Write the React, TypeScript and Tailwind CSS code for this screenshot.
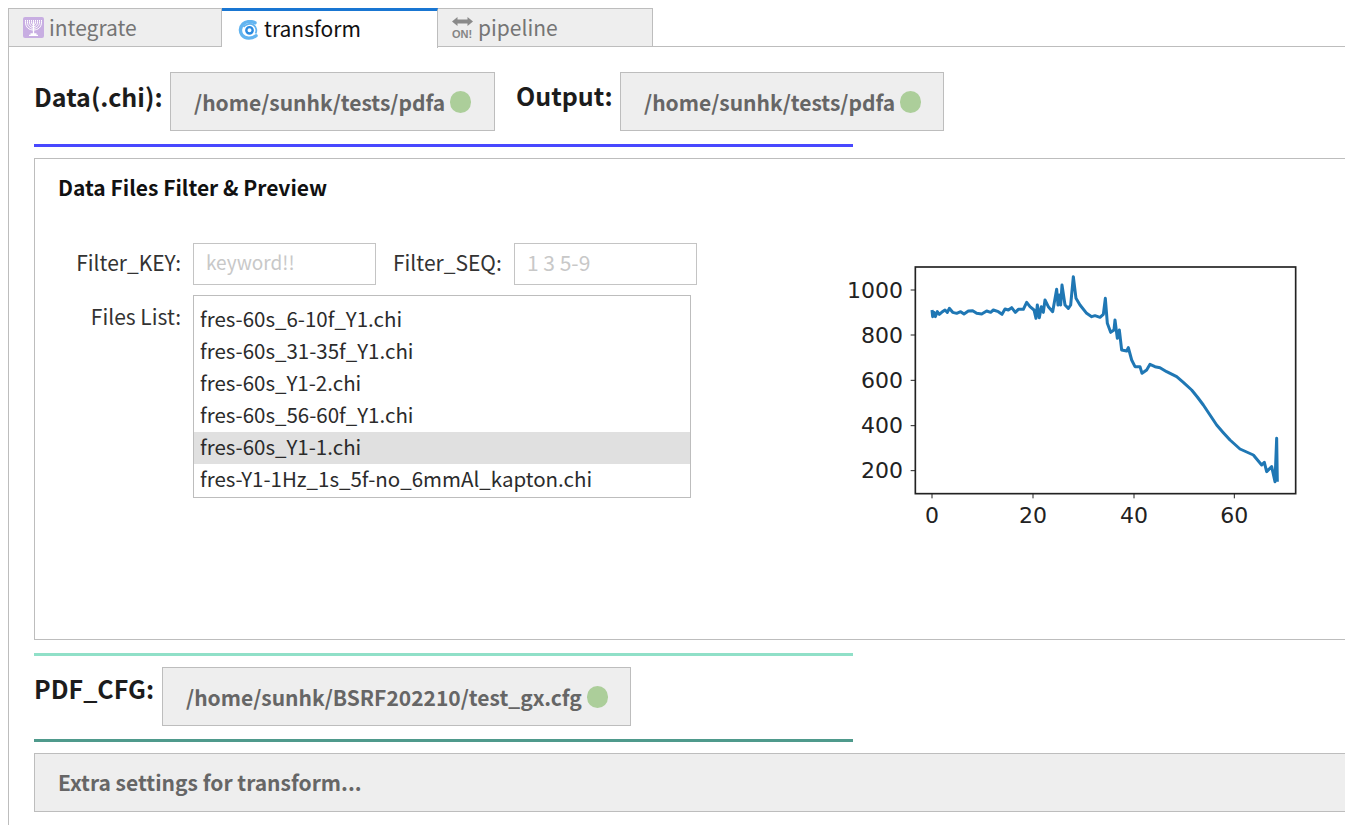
import React from 'react'

const FONT = "font-['Noto_Sans_CJK_SC','Noto_Sans',sans-serif]"

const FILES = [
  'fres-60s_6-10f_Y1.chi',
  'fres-60s_31-35f_Y1.chi',
  'fres-60s_Y1-2.chi',
  'fres-60s_56-60f_Y1.chi',
  'fres-60s_Y1-1.chi',
  'fres-Y1-1Hz_1s_5f-no_6mmAl_kapton.chi',
]

const CURVE =
  '306,165 308,185 312,172 316,185 322,170 328,178 335,172 345,165 352,172 358,160 368,172 380,175 392,170 402,177 415,168 428,167 440,175 455,177 470,168 482,172 490,165 505,170 516,178 525,162 535,165 545,158 556,172 565,163 580,163 590,142 600,155 612,165 618,190 622,150 628,188 634,155 640,172 645,135 655,155 668,170 680,103 684,150 688,120 692,150 696,90 705,150 715,160 722,150 730,65 738,130 750,150 770,175 785,185 795,182 810,187 820,178 826,130 832,205 842,232 852,225 855,195 862,250 868,225 875,285 890,288 895,278 905,315 915,335 930,335 936,355 950,345 960,328 975,335 990,338 1010,350 1040,365 1060,382 1085,405 1102,426 1120,450 1140,480 1160,510 1180,533 1200,555 1230,582 1270,600 1295,630 1303,622 1310,650 1325,635 1335,680 1340,550 1342,680'

function MenorahIcon() {
  return (
    <svg width="21" height="21" viewBox="0 0 21 21" className="shrink-0">
      <rect width="21" height="21" rx="2" fill="#c8aee2" />
      <g stroke="#fff" strokeWidth="1" fill="none">
        <path d="M10.500 4.500V17M7.500 17h6M6 18.300h9" strokeWidth="1.300" />
        <path d="M2.500 5c0 5.500 3.500 8 8 8s8-2.500 8-8" />
        <path d="M4.500 5c0 4 2.500 6.300 6 6.300s6-2.300 6-6.300" />
        <path d="M6.500 5c0 2.800 1.500 4.600 4 4.600s4-1.800 4-4.600" />
        <path d="M8.500 5c0 1.500.8 3 2 3s2-1.500 2-3" />
        <path d="M2 3.800h17" strokeDasharray="1 1" strokeWidth="1.800" />
      </g>
    </svg>
  )
}

function CycloneIcon() {
  return (
    <svg width="22" height="20" viewBox="0 0 22 20" className="shrink-0">
      <path
        d="M17 2.800C14 1 8 1 5 4 2 7 1.600 12 4 15c3 4 10 4 14 .7"
        fill="none"
        stroke="#62b4f0"
        strokeWidth="3.400"
        strokeLinecap="round"
      />
      <path d="M5.500 7c2-3 7-4 10-2 3 2 3.500 6 2 8.500" fill="none" stroke="#62b4f0" strokeWidth="1.800" />
      <circle cx="11.500" cy="10.300" r="3.200" fill="none" stroke="#2a8ae0" strokeWidth="2.400" />
    </svg>
  )
}

function OnIcon() {
  return (
    <svg width="21" height="21" viewBox="0 0 21 21" className="shrink-0">
      <path d="M0 4.500L5.500 0v2.500h10V0L21 4.500 15.500 9V6.500h-10V9z" fill="#8a8a8a" />
      <text x="0" y="20.500" fontSize="11" fontWeight="700" fill="#858585" fontFamily="'Liberation Sans',sans-serif">
        ON!
      </text>
    </svg>
  )
}

function PathBox({ path, className }: { path: string; className: string }) {
  return (
    <div
      className={`flex h-[59px] items-center border border-[#bdbdbd] bg-[#eeeeee] pl-[23px] text-[21px] font-semibold text-[#666666] ${className}`}
    >
      <span className="pt-0.5 leading-none">{path}</span>
      <span className="ml-[5px] h-[22px] w-[21px] shrink-0 rounded-full bg-[#acce9a]" />
    </div>
  )
}

function Chart() {
  const yTicks: [string, number][] = [
    ['1000', 105],
    ['800', 240],
    ['600', 376],
    ['400', 512],
    ['200', 647],
  ]
  const xTicks: [string, number][] = [
    ['0', 306],
    ['20', 609],
    ['40', 912],
    ['60', 1213],
  ]
  return (
    <svg width="480" height="280" viewBox="0 0 1440 840" className="shrink-0">
      <rect x="256" y="36" width="1141" height="680" fill="#fff" stroke="#222" strokeWidth="5" />
      {yTicks.map(([label, y]) => (
        <g key={label}>
          <line x1="242" x2="256" y1={y} y2={y} stroke="#222" strokeWidth="3" />
          <text x="219" y={y + 23} textAnchor="end" fontSize="66" fill="#222" fontFamily="'DejaVu Sans',sans-serif">
            {label}
          </text>
        </g>
      ))}
      {xTicks.map(([label, x]) => (
        <g key={label}>
          <line x1={x} x2={x} y1="716" y2="730" stroke="#222" strokeWidth="3" />
          <text x={x} y="804" textAnchor="middle" fontSize="66" fill="#222" fontFamily="'DejaVu Sans',sans-serif">
            {label}
          </text>
        </g>
      ))}
      <polyline points={CURVE} fill="none" stroke="#1f77b4" strokeWidth="9" strokeLinejoin="round" />
    </svg>
  )
}

export default function App() {
  return (
    <div className={`h-[825px] w-[1345px] overflow-hidden bg-white pt-2 pl-2 ${FONT}`}>
      <div className="relative z-10 -mb-px flex h-[39px] text-[21px] leading-none">
        <div className="flex w-[214px] items-center gap-[5px] border border-[#bdbdbd] bg-[#eeeeee] pl-[14px] text-[#757575]">
          <MenorahIcon />
          <span>integrate</span>
        </div>
        <div className="flex h-[40px] w-[216px] items-center gap-[4px] border-t-[3px] border-r border-[#1976d2] border-r-[#bdbdbd] bg-white pl-[16px] text-[#111111]">
          <CycloneIcon />
          <span className="pb-[3px]">transform</span>
        </div>
        <div className="flex w-[215px] items-center gap-[5px] border-y border-r border-[#bdbdbd] bg-[#eeeeee] pl-[14px] text-[#757575]">
          <OnIcon />
          <span>pipeline</span>
        </div>
      </div>

      <div className="h-[790px] border-t border-l border-[#bdbdbd] pt-[25px] pl-[25px]">
        <div className="flex h-[59px]">
          <span className="w-[130px] pt-[5px] text-[25px] leading-[38px] font-semibold text-[#1c1c1c]">Data(.chi):</span>
          <PathBox path="/home/sunhk/tests/pdfa" className="ml-[6px] w-[325px]" />
          <span className="ml-[21px] w-[98px] pt-[4px] text-[25px] leading-[38px] font-semibold text-[#1c1c1c]">Output:</span>
          <PathBox path="/home/sunhk/tests/pdfa" className="ml-[6px] w-[324px]" />
        </div>

        <div className="mt-[13px] h-[3px] w-[819px] bg-[#4848ff]" />

        <div className="mt-[11px] h-[482px] border-y border-l border-[#bdbdbd] pt-[14px] pl-[23px]">
          <h2 className="text-[21px] leading-[28px] font-semibold text-[#111111]">Data Files Filter &amp; Preview</h2>
          <div className="flex items-start justify-between">
            <div className="mt-[42px] text-[#333333]">
              <div className="flex items-center">
                <label className="w-[123px] pb-[4px] text-right text-[21px] leading-none">Filter_KEY:</label>
                <input
                  placeholder="keyword!!"
                  className="ml-[12px] h-[42px] w-[183px] border border-[#c4c4c4] px-3 pb-[5px] text-[19px] outline-none placeholder:text-[#c8c8c8]"
                />
                <label className="ml-[17px] w-[109px] pb-[4px] text-[21px] leading-none">Filter_SEQ:</label>
                <input
                  placeholder="1 3 5-9"
                  className="ml-[12px] h-[42px] w-[183px] border border-[#c4c4c4] px-3 pb-[5px] text-[21px] outline-none placeholder:text-[#c8c8c8]"
                />
              </div>
              <div className="mt-[10px] flex items-start">
                <label className="w-[123px] pt-[11px] text-right text-[21px] leading-none">Files List:</label>
                <ul className="ml-[12px] h-[203px] w-[498px] border border-[#bdbdbd] pt-[8px] text-[20.5px] leading-[28px] text-[#2b2b2b]">
                  {FILES.map((name, i) => (
                    <li key={name} className={`h-[32px] pl-[6px] ${i === 4 ? 'bg-[#e0e0e0]' : ''}`}>
                      {name}
                    </li>
                  ))}
                </ul>
              </div>
            </div>
            <div className="mt-[54px] mr-[35px]">
              <Chart />
            </div>
          </div>
        </div>

        <div className="mt-[13px] h-[3px] w-[819px] bg-[#90e0c8]" />

        <div className="mt-[11px] flex h-[59px]">
          <span className="w-[122px] pt-[2px] text-[25px] leading-[38px] font-semibold text-[#1c1c1c]">PDF_CFG:</span>
          <PathBox path="/home/sunhk/BSRF202210/test_gx.cfg" className="ml-[6px] w-[469px]" />
        </div>

        <div className="mt-[13px] h-[3px] w-[819px] bg-[#4f9a8c]" />

        <div className="mt-[11px] flex h-[59px] items-center border-y border-l border-[#bdbdbd] bg-[#eeeeee] pl-[23px] text-[21px] font-semibold text-[#666666]">
          Extra settings for transform...
        </div>
      </div>
    </div>
  )
}
